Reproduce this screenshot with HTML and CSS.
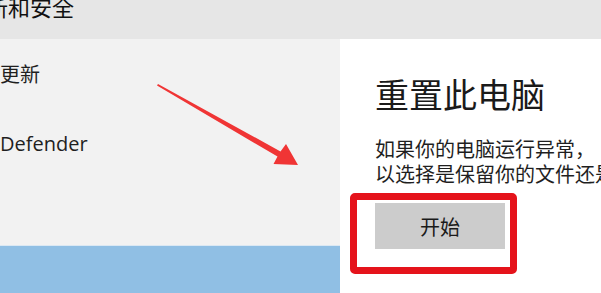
FILE: index.html
```html
<!DOCTYPE html>
<html lang="zh-CN">
<head>
<meta charset="utf-8">
<link rel="stylesheet" href="styles.css">
</head>
<body>
<div class="page">
  <header class="topbar"><span class="topbar-title">更新和安全</span></header>
  <div class="main">
    <nav class="sidebar">
      <div class="nav-item nav-update">更新</div>
      <div class="nav-item nav-defender">Defender</div>
      <div class="nav-selected"></div>
    </nav>
    <section class="content">
      <h1 class="title">重置此电脑</h1>
      <p class="desc"><span class="line">如果你的电脑运行异常，</span><span class="line">以选择是保留你的文件还是删除它们，然后重新安装 Windows。</span></p>
      <button class="start-btn">开始</button>
    </section>
  </div>
  <div class="highlight-box"></div>
  <svg class="arrow" width="601" height="293" viewBox="0 0 601 293">
    <polygon points="158,84 280.5,151.4 286,144 298,165 273.5,164 277.5,156.6 157,85.5" fill="#f03535"/>
  </svg>
</div>
</body>
</html>
```
FILE: styles.css
```css
* { box-sizing: border-box; }
html, body { margin: 0; padding: 0; }
body {
  width: 601px;
  height: 293px;
  overflow: hidden;
  font-family: "Noto Sans", "Noto Sans CJK SC", sans-serif;
  color: #1a1a1a;
  background: #ffffff;
}
.page {
  position: relative;
  width: 601px;
  height: 293px;
  overflow: hidden;
}
.topbar {
  height: 39px;
  background: #e6e6e6;
  overflow: hidden;
}
.topbar-title {
  display: block;
  margin-left: -36px;
  margin-top: -9px;
  font-family: "Noto Sans CJK SC", sans-serif;
  font-size: 22px;
  line-height: 30px;
  color: #111;
  white-space: nowrap;
}
.main {
  height: 254px;
  display: flex;
  align-items: stretch;
}
.sidebar {
  width: 340px;
  flex: none;
  height: 254px;
  background: #f2f2f2;
  padding-top: 21px;
}
.nav-item {
  height: 28px;
  font-size: 20px;
  line-height: 28px;
  color: #1f1f1f;
  white-space: nowrap;
}
.nav-update {
  font-family: "Noto Sans CJK SC", sans-serif;
}
.nav-defender {
  margin-top: 42px;
  font-family: "Open Sans", "Noto Sans", sans-serif;
}
.nav-selected {
  margin-top: 87px;
  height: 48px;
  background: #90bfe4;
  border-top: 1px solid #dbe8f3;
}
.content {
  flex: 1;
  background: #ffffff;
  padding-left: 35px;
  min-width: 0;
  overflow: hidden;
}
.title {
  margin: 35px 0 0 0;
  font-family: "Noto Sans CJK SC", sans-serif;
  font-weight: 400;
  font-size: 34px;
  line-height: 40px;
  color: #1a1a1a;
  white-space: nowrap;
}
.desc {
  margin: 22px 0 0 0;
  font-family: "Noto Sans CJK SC", sans-serif;
  font-size: 20px;
  line-height: 25px;
  color: #1f1f1f;
}
.line {
  display: block;
  white-space: nowrap;
}
.start-btn {
  display: block;
  margin-top: 17px;
  width: 130px;
  height: 46px;
  border: none;
  background: #cccccc;
  font-family: "Noto Sans CJK SC", sans-serif;
  font-size: 20px;
  color: #1a1a1a;
  padding: 0;
}
.highlight-box {
  position: absolute;
  left: 350px;
  top: 193px;
  width: 167px;
  height: 81px;
  border: 7px solid #e5131b;
  border-radius: 5px;
}
.arrow {
  position: absolute;
  left: 0;
  top: 0;
  pointer-events: none;
}
```
